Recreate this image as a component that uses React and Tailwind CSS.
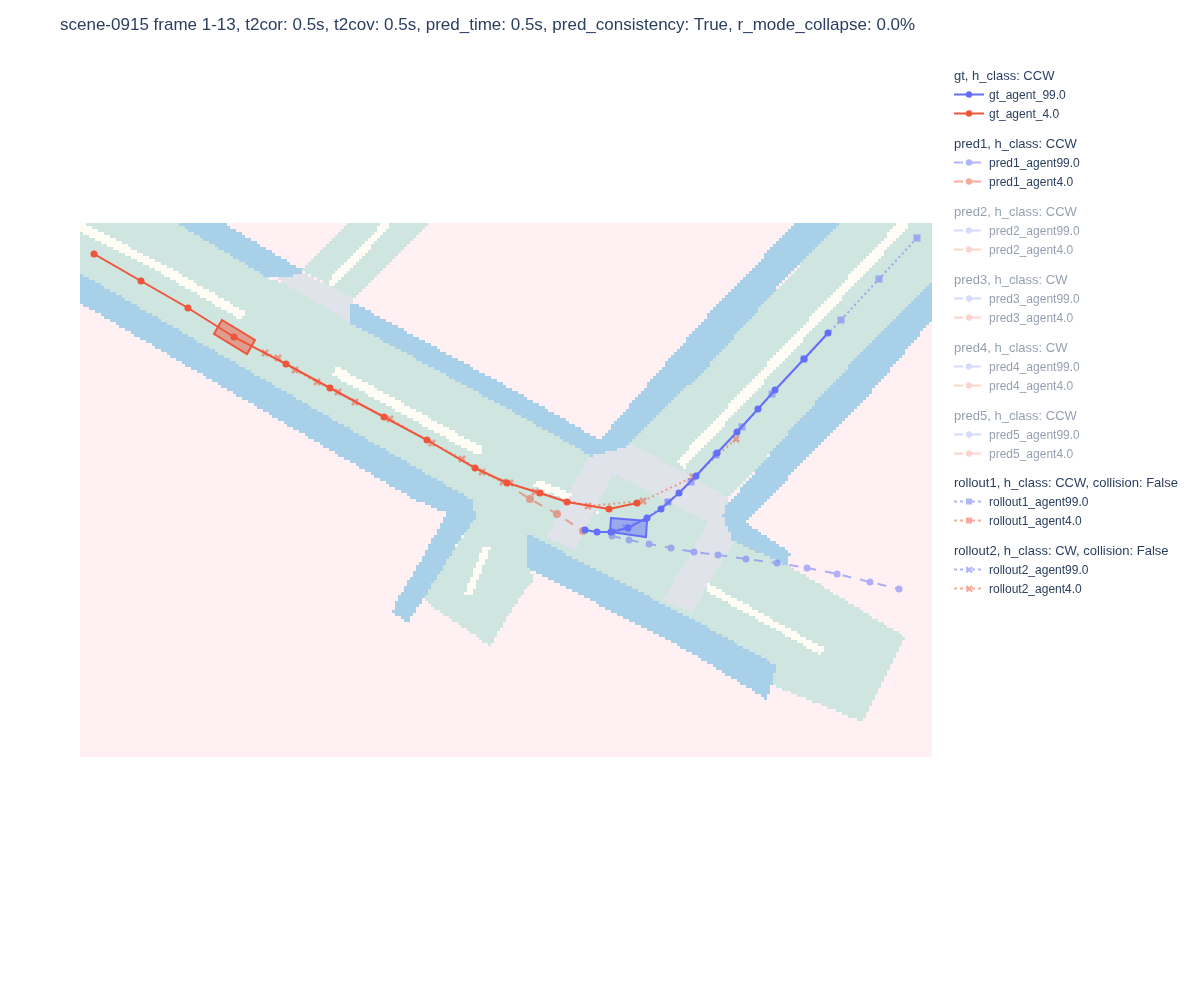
const PINK = '#fff0f3'
const BLUE = '#a8d0e8'
const GREEN = '#cfe5df'
const GRAY = '#e1e3ea'
const LANE = '#fffcf5'

// thick line -> quad, so lane stripes go through the same raster as the roads
const stripe = (x1, y1, x2, y2, w) => {
  const len = Math.hypot(x2 - x1, y2 - y1)
  const nx = ((y2 - y1) / len) * (w / 2)
  const ny = ((x1 - x2) / len) * (w / 2)
  return [[x1 + nx, y1 + ny], [x2 + nx, y2 + ny], [x2 - nx, y2 - ny], [x1 - nx, y1 - ny]]
}

// painted in order, later ones on top
const mapLayers = [
  [GREEN, [[80, 223], [177, 223], [268, 278], [350, 305], [350, 323], [595, 455], [617, 457], [840, 223], [932, 223], [932, 283], [729, 497], [723, 525], [905, 637], [863, 722], [690, 652], [528, 568], [535, 577], [520, 597], [490, 646], [430, 605], [423, 597], [476, 517], [415, 500], [80, 303]]],
  [GREEN, [[348, 223], [430, 223], [353, 300], [302, 270]]],
  // blue shoulders
  [BLUE, [[177, 223], [223, 223], [302, 270], [300, 278], [268, 278]]],
  [BLUE, [[350, 304], [358, 305], [510, 388], [600, 440], [660, 370], [692, 333], [723, 298], [763, 257], [797, 223], [840, 223], [777, 288], [743, 327], [703, 372], [660, 412], [617, 457], [593, 457], [510, 410], [350, 323]]],
  [BLUE, [[932, 283], [932, 320], [873, 390], [827, 437], [767, 500], [745, 522], [790, 552], [788, 566], [733, 541], [723, 525], [723, 510], [793, 427], [870, 343]]],
  [BLUE, [[526, 533], [690, 618], [776, 665], [773, 683], [766, 699], [690, 652], [528, 568]]],
  [BLUE, [[80, 273], [472, 500], [476, 517], [458, 543], [427, 593], [408, 622], [392, 613], [397, 600], [422, 558], [443, 520], [447, 513], [415, 500], [80, 303]]],
  // crossings
  [GRAY, [[277, 279], [302, 273], [352, 298], [350, 323], [335, 313]]],
  [GRAY, [[588, 457], [633, 445], [728, 497], [723, 515], [708, 522], [613, 473]]],
  [GRAY, [[588, 457], [613, 473], [575, 550], [547, 537]]],
  [GRAY, [[708, 522], [723, 515], [733, 543], [692, 613], [663, 600]]],
  // lane stripes
  [LANE, stripe(78, 226, 163, 269, 9)],
  [LANE, stripe(163, 269, 243, 316, 9)],
  [LANE, stripe(335, 371, 481, 452, 9.5)],
  [LANE, stripe(535, 483, 570, 497, 8)],
  [LANE, stripe(597, 512, 600, 513, 6)],
  [LANE, stripe(487, 547, 468, 595, 7)],
  [LANE, stripe(388, 223, 330, 285, 8)],
  [LANE, stripe(905, 223, 680, 465, 10)],
  [LANE, stripe(707, 587, 823, 652, 7.5)],
]

const inside = (px, py, poly) => {
  let hit = false
  for (let i = 0, j = poly.length - 1; i < poly.length; j = i++) {
    const [xi, yi] = poly[i]
    const [xj, yj] = poly[j]
    if (yi > py !== yj > py && px < ((xj - xi) * (py - yi)) / (yj - yi) + xi) hit = !hit
  }
  return hit
}

// the map in the picture is a low-res raster image, 3px a cell
const buildRaster = () => {
  const cell = 3
  const paths = {}
  for (let y = 223; y < 757; y += cell) {
    let runColor = null
    let runStart = 80
    for (let x = 80; x <= 932; x += cell) {
      let color = null
      if (x < 932) {
        for (const [c, poly] of mapLayers) {
          if (inside(x + cell / 2, y + cell / 2, poly)) color = c
        }
      }
      if (color !== runColor) {
        if (runColor) paths[runColor] = (paths[runColor] || '') + `M${runStart} ${y}H${x}V${y + cell}H${runStart}Z`
        runColor = color
        runStart = x
      }
    }
  }
  return paths
}
const rasterPaths = buildRaster()

const RED = '#ef553b'
const IND = '#636efa'

const gt4 = [[94, 254], [141, 281], [188, 308], [234, 337], [286, 364], [330, 388], [384, 417], [427, 440], [475, 468], [507, 483], [540, 493], [567, 502], [609, 509], [637, 503]]
const gt99 = [[828, 333], [804, 359], [775, 390], [758, 409], [737, 432], [717, 453], [696, 476], [679, 493], [661, 509], [647, 518], [628, 528], [611, 532], [597, 532], [585, 530]]
const roll99 = [[917, 238], [879, 279], [841, 320], [804, 359], [772, 394], [742, 427], [716, 455], [691, 482], [668, 502]]
const rollX4 = [[265, 353], [278, 358], [295, 370], [317, 382], [338, 392], [355, 402], [390, 419], [432, 443], [462, 459], [482, 472], [503, 482], [510, 483], [535, 492], [588, 506], [643, 501], [693, 477], [736, 439]]
const dash4 = [[519, 492], [530, 499], [557, 514], [583, 531]]
const dash99 = [[612, 536], [629, 540], [649, 544], [671, 548], [694, 552], [718, 555], [746, 559], [777, 563], [807, 568], [837, 574], [870, 582], [899, 589]]

const toPoints = (pts) => pts.map((p) => p.join(',')).join(' ')

function Trace({ pts, color, width = 2, dash, marker = 'circle', size = 3.5, opacity = 1, skip = 0 }) {
  return (
    <g opacity={opacity}>
      <polyline points={toPoints(pts)} fill="none" stroke={color} strokeWidth={width} strokeDasharray={dash} />
      {pts.slice(skip).map(([x, y], i) => {
        if (marker === 'square') return <rect key={i} x={x - size} y={y - size} width={size * 2} height={size * 2} fill={color} />
        if (marker === 'x') return <path key={i} d={`M${x - size} ${y - size}L${x + size} ${y + size}M${x + size} ${y - size}L${x - size} ${y + size}`} stroke={color} strokeWidth="2.6" />
        return <circle key={i} cx={x} cy={y} r={size} fill={color} />
      })}
    </g>
  )
}

function MapPlot() {
  return (
    <svg width="852" height="534" viewBox="80 223 852 534" className="block">
      <rect x="80" y="223" width="852" height="534" fill={PINK} />
      {Object.entries(rasterPaths).map(([color, d]) => (
        <path key={color} d={d} fill={color} shapeRendering="crispEdges" />
      ))}
      <Trace pts={rollX4} color={RED} dash="2 3" marker="x" size={3} opacity={0.5} />
      <Trace pts={dash4} color={RED} dash="9 9" size={4} opacity={0.5} skip={1} />
      <Trace pts={[[668, 502], [647, 518], [625, 527], [612, 531]]} color={IND} dash="2 3" marker="x" size={2.5} opacity={0.4} />
      <Trace pts={roll99} color={IND} dash="2 3" marker="square" size={3.5} opacity={0.5} />
      <Trace pts={dash99} color={IND} dash="9 9" size={3.5} opacity={0.5} />
      <polygon points="222,320 255,340 247,354 214,334" fill={RED} fillOpacity="0.5" stroke={RED} strokeWidth="2" />
      <polygon points="611,518 647,521 646,537 610,532" fill={IND} fillOpacity="0.5" stroke={IND} strokeWidth="2" />
      <Trace pts={gt4} color={RED} />
      <Trace pts={gt99} color={IND} />
    </svg>
  )
}

function LegendIcon({ color, kind, opacity }) {
  return (
    <svg width="30" height="19" className="shrink-0 mr-[5px]" style={{ opacity }}>
      {kind === 'solid' && <line x1="0" y1="9.5" x2="30" y2="9.5" stroke={color} strokeWidth="2" />}
      {kind === 'pred' && <line x1="0" y1="9.5" x2="30" y2="9.5" stroke={color} strokeWidth="2" strokeDasharray="9 9" />}
      {(kind === 'square' || kind === 'x') && <line x1="0" y1="9.5" x2="30" y2="9.5" stroke={color} strokeWidth="2" strokeDasharray="3 3" />}
      {(kind === 'solid' || kind === 'pred') && <circle cx="15" cy="9.5" r="3.2" fill={color} />}
      {kind === 'square' && <rect x="12" y="6.5" width="6" height="6" fill={color} />}
      {kind === 'x' && <path d="M12.5 7L18 12.5M18 7L12.5 12.5" stroke={color} strokeWidth="2.2" />}
    </svg>
  )
}

const legend = [
  { title: 'gt, h_class: CCW', a: 'gt_agent_99.0', b: 'gt_agent_4.0', kind: 'solid', icon: 1, text: 1 },
  { title: 'pred1, h_class: CCW', a: 'pred1_agent99.0', b: 'pred1_agent4.0', kind: 'pred', icon: 0.5, text: 1 },
  { title: 'pred2, h_class: CCW', a: 'pred2_agent99.0', b: 'pred2_agent4.0', kind: 'pred', icon: 0.25, text: 0.5 },
  { title: 'pred3, h_class: CW', a: 'pred3_agent99.0', b: 'pred3_agent4.0', kind: 'pred', icon: 0.25, text: 0.5 },
  { title: 'pred4, h_class: CW', a: 'pred4_agent99.0', b: 'pred4_agent4.0', kind: 'pred', icon: 0.25, text: 0.5 },
  { title: 'pred5, h_class: CCW', a: 'pred5_agent99.0', b: 'pred5_agent4.0', kind: 'pred', icon: 0.25, text: 0.5 },
  { title: 'rollout1, h_class: CCW, collision: False', a: 'rollout1_agent99.0', b: 'rollout1_agent4.0', kind: 'square', icon: 0.5, text: 1, tight: true },
  { title: 'rollout2, h_class: CW, collision: False', a: 'rollout2_agent99.0', b: 'rollout2_agent4.0', kind: 'x', icon: 0.5, text: 1 },
]

function LegendGroup({ group }) {
  const { title, a, b, kind, icon, text, tight } = group
  return (
    <div className={tight ? '-mt-px' : ''} style={{ opacity: text }}>
      <div className="h-[19px] leading-[19px] text-[13px] whitespace-nowrap">{title}</div>
      <div className="flex items-center h-[19px] text-[12px] whitespace-nowrap">
        <LegendIcon color={IND} kind={kind} opacity={icon / text} />
        {a}
      </div>
      <div className="flex items-center h-[19px] text-[12px] whitespace-nowrap">
        <LegendIcon color={RED} kind={kind} opacity={icon / text} />
        {b}
      </div>
    </div>
  )
}

export default function App() {
  return (
    <div className="w-[1200px] h-[1000px] bg-white text-[#2a3f5f] font-['Liberation_Sans',Arial,sans-serif]">
      <h1 className="pl-[60px] pt-[14px] text-[17px] leading-[22px] font-normal whitespace-nowrap will-change-transform">
        scene-0915 frame 1-13, t2cor: 0.5s, t2cov: 0.5s, pred_time: 0.5s, pred_consistency: True, r_mode_collapse: 0.0%
      </h1>
      <div className="flex">
        <div className="pl-[80px] pt-[187px]">
          <MapPlot />
        </div>
        <div className="ml-[22px] mt-[30px] flex flex-col gap-[11px] will-change-transform">
          {legend.map((group) => (
            <LegendGroup key={group.title} group={group} />
          ))}
        </div>
      </div>
    </div>
  )
}
